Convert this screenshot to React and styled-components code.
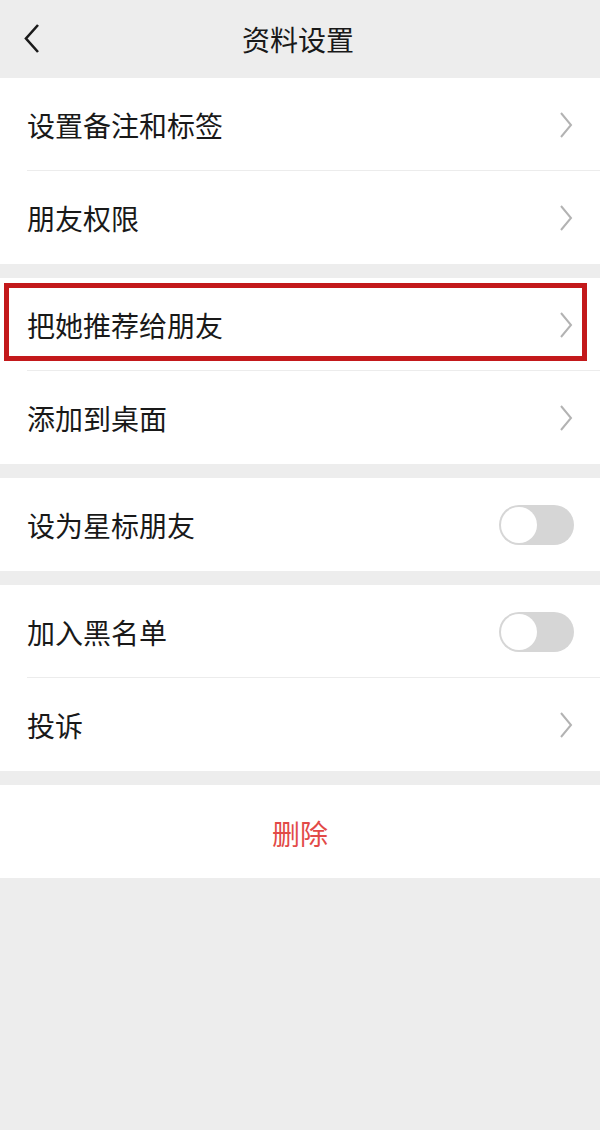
import React, { useState } from 'react';
import styled, { createGlobalStyle } from 'styled-components';

const GlobalStyle = createGlobalStyle`
    html, body {
        margin: 0;
        padding: 0;
        background: #ededed;
        font-family: "Noto Sans CJK SC", "Noto Sans", sans-serif;
    }
`;

const Page = styled.div`
    width: 600px;
    min-height: 1130px;
    background: #ededed;
`;

const Header = styled.div`
    position: relative;
    height: 78px;
    display: flex;
    align-items: center;
    justify-content: center;
`;

const BackButton = styled.button`
    position: absolute;
    left: 18px;
    top: 18px;
    width: 30px;
    height: 42px;
    padding: 0;
    border: none;
    background: transparent;
    display: flex;
    align-items: center;
    justify-content: center;
`;

const Title = styled.h1`
    margin: 0 4px 0 0;
    font-size: 28px;
    font-weight: 400;
    color: #191919;
`;

const Group = styled.div`
    background: #fff;
    margin-bottom: 14px;
`;

const Row = styled.div`
    position: relative;
    height: 93px;
    display: flex;
    align-items: center;
    justify-content: ${(props) => (props.center ? 'center' : 'space-between')};
    padding: 0 27px;
    box-sizing: border-box;

    &:not(:last-child)::after {
        content: '';
        position: absolute;
        left: 27px;
        right: 0;
        bottom: 0;
        height: 1px;
        background: #ececec;
    }
`;

const Label = styled.span`
    font-size: 28px;
    color: ${(props) => (props.danger ? '#e24a47' : '#191919')};
    line-height: 1;
    margin-top: ${(props) => (props.danger ? '2px' : '0')};
`;

const Highlight = styled.div`
    position: absolute;
    left: 4px;
    right: 13px;
    top: 5px;
    bottom: 10px;
    border: 5px solid #c3191b;
    pointer-events: none;
`;

const Track = styled.button`
    width: 75px;
    height: 40px;
    padding: 2px;
    border: none;
    border-radius: 20px;
    background: ${(props) => (props.on ? '#07c160' : '#d6d6d6')};
    display: flex;
    justify-content: ${(props) => (props.on ? 'flex-end' : 'flex-start')};
    align-items: center;
    box-sizing: border-box;
    margin-right: -1px;
`;

const Knob = styled.span`
    width: 36px;
    height: 36px;
    border-radius: 50%;
    background: #fff;
`;

const Chevron = () => (
    <svg width="14" height="28" viewBox="0 0 14 28">
        <polyline points="2,2 12,14 2,26" fill="none" stroke="#b3b3b3" strokeWidth="2" />
    </svg>
);

const Switch = ({ on, onToggle }) => (
    <Track on={on ? 1 : 0} onClick={onToggle}>
        <Knob />
    </Track>
);

const App = () => {
    const [starred, setStarred] = useState(false);
    const [blocked, setBlocked] = useState(false);

    return (
        <Page>
            <GlobalStyle />
            <Header>
                <BackButton>
                    <svg width="18" height="30" viewBox="0 0 18 30">
                        <polyline points="14,1 2,14.5 14,28" fill="none" stroke="#1a1a1a" strokeWidth="2.6" />
                    </svg>
                </BackButton>
                <Title>资料设置</Title>
            </Header>

            <Group>
                <Row>
                    <Label>设置备注和标签</Label>
                    <Chevron />
                </Row>
                <Row>
                    <Label>朋友权限</Label>
                    <Chevron />
                </Row>
            </Group>

            <Group>
                <Row>
                    <Label>把她推荐给朋友</Label>
                    <Chevron />
                    <Highlight />
                </Row>
                <Row>
                    <Label>添加到桌面</Label>
                    <Chevron />
                </Row>
            </Group>

            <Group>
                <Row>
                    <Label>设为星标朋友</Label>
                    <Switch on={starred} onToggle={() => setStarred(!starred)} />
                </Row>
            </Group>

            <Group>
                <Row>
                    <Label>加入黑名单</Label>
                    <Switch on={blocked} onToggle={() => setBlocked(!blocked)} />
                </Row>
                <Row>
                    <Label>投诉</Label>
                    <Chevron />
                </Row>
            </Group>

            <Group>
                <Row center>
                    <Label danger>删除</Label>
                </Row>
            </Group>
        </Page>
    );
};

export default App;
